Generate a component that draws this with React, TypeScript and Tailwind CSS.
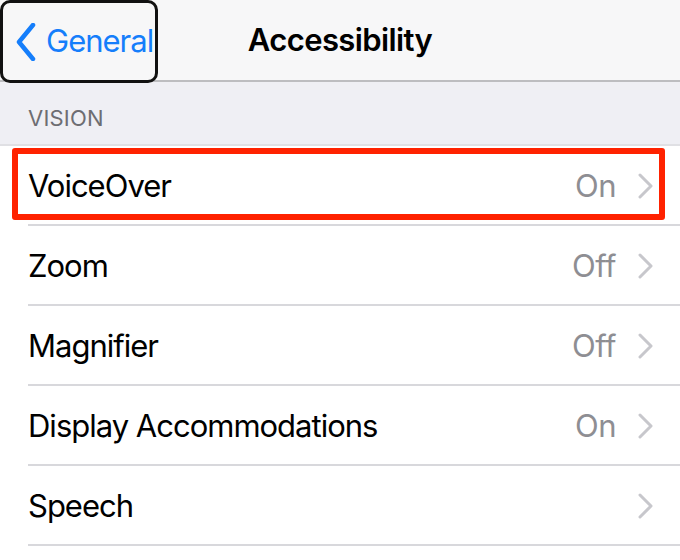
type Row = { label: string; value?: string; selected?: boolean };

const rows: Row[] = [
  { label: 'VoiceOver', value: 'On', selected: true },
  { label: 'Zoom', value: 'Off' },
  { label: 'Magnifier', value: 'Off' },
  { label: 'Display Accommodations', value: 'On' },
  { label: 'Speech' },
];

function Chevron() {
  return (
    <svg width="16" height="26" viewBox="0 0 16 26" fill="none" className="shrink-0">
      <path d="M2 2l11 11L2 24" stroke="#c7c7cc" strokeWidth="3" strokeLinecap="round" strokeLinejoin="round" />
    </svg>
  );
}

function BackArrow() {
  return (
    <svg width="20" height="38" viewBox="0 0 20 38" fill="none" className="shrink-0">
      <path d="M17 2L3 19l14 17" stroke="#157efb" strokeWidth="4.5" strokeLinecap="round" strokeLinejoin="round" />
    </svg>
  );
}

function SettingsRow({ row }: { row: Row }) {
  return (
    <div className="relative h-[80px] flex items-center pl-[28px] pr-[26px]">
      <span className="flex-1 text-[31px] text-black tracking-[-1px]">{row.label}</span>
      {row.value && <span className="text-[31px] text-[#8e8e93] mr-[22px] tracking-[-0.5px]">{row.value}</span>}
      <Chevron />
      {row.selected && (
        <div className="absolute left-[12px] right-[15px] top-[2px] bottom-[6px] border-[6px] border-[#ff2200] rounded-[3px]" />
      )}
      <div className="absolute left-[28px] right-0 bottom-0 h-[2px] bg-[#d8d8dc]" />
    </div>
  );
}

export default function App() {
  return (
    <div className="w-[680px] h-[560px] bg-white overflow-hidden" style={{ fontFamily: 'Inter, "Noto Sans", sans-serif' }}>
      <header className="relative h-[82px] bg-[#f7f7f8] border-b-2 border-[#bdbdc0] flex items-center justify-center">
        <div className="absolute left-0 top-0 w-[158px] h-[83px] border-[3px] border-[#111] rounded-[10px] flex items-center pl-[13px] gap-[10px]">
          <BackArrow />
          <span className="text-[31px] text-[#157efb] tracking-[-1px]">General</span>
        </div>
        <h1 className="text-[31px] font-semibold text-black tracking-[-0.6px]">Accessibility</h1>
      </header>
      <div className="h-[64px] bg-[#efeff4] border-b-2 border-[#e0e0e4] flex items-end pb-[9px] pl-[28px]">
        <span className="text-[22px] text-[#6d6d72] tracking-[0.2px]">VISION</span>
      </div>
      {rows.map((row) => (
        <SettingsRow key={row.label} row={row} />
      ))}
    </div>
  );
}
